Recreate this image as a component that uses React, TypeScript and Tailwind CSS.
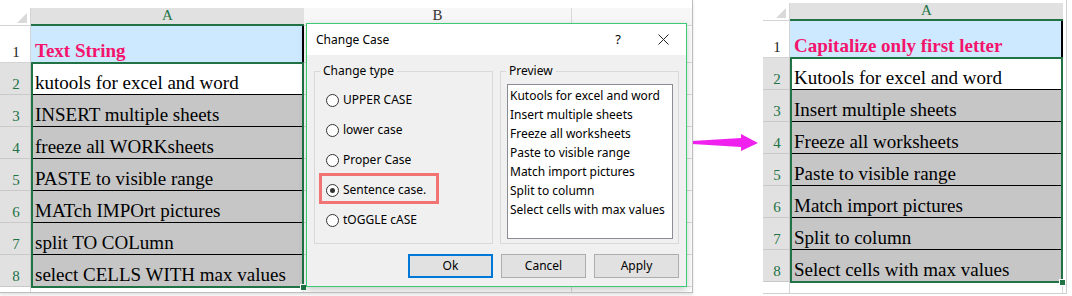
import React from 'react';

const leftRows = [
  'kutools for excel and word',
  'INSERT multiple sheets',
  'freeze all WORKsheets',
  'PASTE to visible range',
  'MATch IMPOrt pictures',
  'split TO COLumn',
  'select CELLS WITH max values',
];

const rightRows = [
  'Kutools for excel and word',
  'Insert multiple sheets',
  'Freeze all worksheets',
  'Paste to visible range',
  'Match import pictures',
  'Split to column',
  'Select cells with max values',
];

const caseTypes = ['UPPER CASE', 'lower case', 'Proper Case', 'Sentence case.', 'tOGGLE cASE'];

function Corner({ w }: { w: string }) {
  return (
    <div className={`${w} shrink-0 bg-white border-r border-b border-[#d4d4d4] flex items-end justify-end pr-[3px] pb-[2px]`}>
      <svg width="10" height="10" viewBox="0 0 10 10">
        <polygon points="10,0 10,10 0,10" fill="#d9d9d9" />
      </svg>
    </div>
  );
}

function RowNum({ w, n, selected }: { w: string; n?: number; selected: boolean }) {
  return (
    <div
      className={`${w} shrink-0 border-r border-b flex items-end justify-center pl-[2px] pb-[2px] text-[15px] leading-none ${
        selected ? 'bg-[#e1e1e1] border-[#c9c9c9] text-[#217346]' : 'bg-white border-[#d4d4d4] text-[#222]'
      }`}
    >
      {n}
    </div>
  );
}

function Filler({ wide, header }: { wide: boolean; header?: boolean }) {
  if (!wide) return <div className="flex-1 bg-white border-b border-white" />;
  return (
    <>
      <div
        className={`w-[268px] shrink-0 border-r border-b border-[#d9d9d9] flex items-end justify-center pb-[2px] text-[15px] leading-none text-[#333] ${
          header ? 'bg-[#f7f7f7]' : 'bg-white'
        }`}
      >
        {header ? 'B' : ''}
      </div>
      <div className={`flex-1 border-b border-[#d9d9d9] ${header ? 'bg-[#f7f7f7]' : 'bg-white'}`} />
    </>
  );
}

function Sheet({ w, title, rows, wide }: { w: string; title: string; rows: string[]; wide: boolean }) {
  return (
    <div className="relative flex flex-col font-['Liberation_Serif','Times_New_Roman',serif]">
      <div className="flex h-[18px]">
        <Corner w={w} />
        <div className="w-[273px] shrink-0 bg-[#e1e1e1] border-b-2 border-[#217346] flex items-end justify-center pb-[1px] text-[15px] leading-none text-[#217346]">
          A
        </div>
        <Filler wide={wide} header />
      </div>
      <div className="flex h-[37px]">
        <RowNum w={w} n={1} selected={false} />
        <div className="w-[273px] shrink-0 bg-[#cce9ff] border-r-2 border-black flex items-end pl-[4px] pb-[3px] text-[19px] leading-none font-bold text-[#f5146c]">
          {title}
        </div>
        <Filler wide={wide} />
      </div>
      {rows.map((r, i) => (
        <div key={r} className="flex h-[32px]">
          <RowNum w={w} n={i + 2} selected />
          <div
            className={`w-[273px] shrink-0 border-b border-black flex items-end pl-[4px] pb-[2px] text-[19px] leading-none text-black ${
              i === 0 ? 'bg-white' : 'bg-[#c6c6c6]'
            }`}
          >
            {r}
          </div>
          <Filler wide={wide} />
        </div>
      ))}
      <div className="flex h-[32px]">
        <RowNum w={w} selected={false} />
        <div className="w-[273px] shrink-0 bg-white border-r border-b border-[#d9d9d9]" />
        <Filler wide={wide} />
      </div>
      {/* selection frame A2:A8 */}
      <div
        className={`absolute top-[54px] h-[226px] w-[273px] border-2 border-[#217346] pointer-events-none ${
          w === 'w-[31px]' ? 'left-[31px]' : 'left-[27px]'
        }`}
      >
        <div className="absolute -right-[5px] -bottom-[5px] w-[7px] h-[7px] bg-[#217346] border border-white" />
      </div>
    </div>
  );
}

function Radio({ checked }: { checked?: boolean }) {
  return (
    <div className="w-[13px] h-[13px] rounded-full border border-[#333] bg-white flex items-center justify-center shrink-0">
      {checked && <div className="w-[5px] h-[5px] rounded-full bg-[#333]" />}
    </div>
  );
}

function Dialog() {
  return (
    <div className="absolute left-[306px] top-[23px] w-[381px] h-[264px] border border-[#3dca74] bg-[#f0f0f0] shadow-[0_3px_8px_rgba(0,0,0,0.22)] flex flex-col font-['Noto_Sans','Segoe_UI',sans-serif] text-[12px] text-black">
      <div className="h-[31px] shrink-0 bg-white flex items-center pl-[9px]">
        <span>Change Case</span>
        <span className="ml-auto text-[13px] leading-none">?</span>
        <svg className="ml-[37px] mr-[17px]" width="11" height="11" viewBox="0 0 11 11">
          <path d="M0.5 0.5 L10.5 10.5 M10.5 0.5 L0.5 10.5" stroke="#222" strokeWidth="1" />
        </svg>
      </div>
      <div className="flex-1 flex flex-col px-[7px] pt-[16px]">
        <div className="flex gap-[7px] h-[173px]">
          <div className="relative w-[179px] border border-[#d9d9d9]">
            <span className="absolute left-[5px] -top-[9px] px-[3px] bg-[#f0f0f0] leading-[16px]">Change type</span>
            <div className="flex flex-col pt-[13px] pl-[11px]">
              {caseTypes.map((t, i) => (
                <div key={t} className="h-[30px] flex items-center gap-[4px]">
                  <Radio checked={i === 3} />
                  <span>{t}</span>
                </div>
              ))}
            </div>
            <div className="absolute left-[4px] top-[101px] w-[120px] h-[31px] border-[3px] border-[#f27373]" />
          </div>
          <div className="relative w-[179px] border border-[#d9d9d9] pl-[6px] pt-[12px]">
            <span className="absolute left-[5px] -top-[9px] px-[3px] bg-[#f0f0f0] leading-[16px]">Preview</span>
            <div className="w-[166px] h-[155px] border border-[#8a8d93] bg-white pl-[2px] pt-[1px]">
              {rightRows.map((r) => (
                <div key={r} className="leading-[19px] whitespace-nowrap">
                  {r}
                </div>
              ))}
            </div>
          </div>
        </div>
        <div className="flex justify-end gap-[8px] mt-[10px]">
          <button className="w-[85px] h-[24px] bg-[#e1e1e1] border-2 border-[#0078d7]">Ok</button>
          <button className="w-[85px] h-[24px] bg-[#e1e1e1] border border-[#adadad]">Cancel</button>
          <button className="w-[85px] h-[24px] bg-[#e1e1e1] border border-[#adadad]">Apply</button>
        </div>
      </div>
    </div>
  );
}

export default function App() {
  return (
    <div className="w-[1072px] h-[296px] bg-white flex overflow-hidden">
      <div className="relative w-[693px] h-[293px] shrink-0 pt-[8px] overflow-hidden border-b border-r border-[#bdbdbd] shadow-[0_2px_3px_rgba(0,0,0,0.12)]">
        <Sheet w="w-[31px]" title="Text String" rows={leftRows} wide />
        <Dialog />
      </div>
      <div className="w-[70px] shrink-0">
        <svg className="mt-[133px] -ml-[2px]" width="68" height="20" viewBox="0 0 68 20">
          <polygon points="1,8 50,5 50,1 67,10 50,18 50,14 1,11" fill="#f021ef" />
        </svg>
      </div>
      <div className="w-[304px] h-[294px] shrink-0 pt-[3px] overflow-hidden border-r border-b border-[#cfcfcf]">
        <Sheet w="w-[27px]" title="Capitalize only first letter" rows={rightRows} wide={false} />
      </div>
    </div>
  );
}
